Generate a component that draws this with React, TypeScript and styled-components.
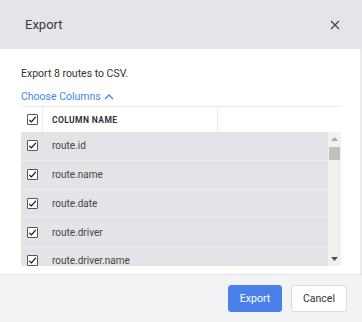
import React from 'react'
import styled, { createGlobalStyle } from 'styled-components'

const GlobalStyle = createGlobalStyle`
  html, body {
    margin: 0;
    padding: 0;
    background: #ffffff;
  }
  body {
    font-family: Roboto, "Liberation Sans", Arial, sans-serif;
  }
  * {
    box-sizing: border-box;
  }
`

const COLUMNS = ['route.id', 'route.name', 'route.date', 'route.driver', 'route.driver.name']

const Modal = styled.div`
  width: 362px;
  height: 322px;
  display: flex;
  flex-direction: column;
  overflow: hidden;
`

const Header = styled.div`
  height: 49px;
  flex-shrink: 0;
  display: flex;
  align-items: center;
  justify-content: space-between;
  padding: 0 21px 0 25px;
  background: #e4e5e9;
`

const Title = styled.div`
  font-size: 13px;
  color: #3a3a3a;
`

const CloseButton = styled.button`
  border: none;
  background: none;
  padding: 0;
  width: 12px;
  height: 12px;
  display: flex;
  cursor: pointer;
  color: #444444;
`

const Body = styled.div`
  flex: 1;
  background: #ffffff;
  padding: 18px 21px 8px;
  border-right: 2px solid #ececee;
  display: flex;
  flex-direction: column;
`

const Intro = styled.div`
  font-size: 10.5px;
  line-height: 13px;
  color: #333333;
`

const Toggle = styled.button`
  margin-top: 10px;
  margin-bottom: 3px;
  align-self: flex-start;
  display: flex;
  align-items: center;
  gap: 3px;
  border: none;
  background: none;
  padding: 0;
  font-family: inherit;
  font-size: 10.5px;
  line-height: 13px;
  color: #4a86e8;
  cursor: pointer;
`

const Table = styled.div`
  width: 320px;
  border-top: 1px solid #ececef;
`

const HeadRow = styled.div`
  display: grid;
  grid-template-columns: 22px 175px 1fr;
  height: 25px;
  background: #ffffff;
`

const HeadCell = styled.div<{ divider?: boolean }>`
  display: flex;
  align-items: center;
  padding-left: ${({ divider }) => (divider ? '9px' : '6px')};
  border-right: 1px solid #ececef;
  font-size: 8.5px;
  font-weight: 700;
  letter-spacing: 0.4px;
  text-transform: uppercase;
  color: #333333;

  &:last-child {
    border-right: none;
  }
`

const ListFrame = styled.div`
  height: 134px;
  display: flex;
`

const Rows = styled.div`
  flex: 1;
  overflow: hidden;
  background: #e3e4e8;
`

const Row = styled.div`
  display: grid;
  grid-template-columns: 22px 1fr;
  height: 28.75px;
  border-bottom: 1px solid #ebecef;
`

const CheckCell = styled.div`
  display: flex;
  align-items: center;
  padding-left: 6px;
`

const NameCell = styled.div`
  display: flex;
  align-items: center;
  padding-left: 9px;
  font-size: 10px;
  color: #444444;
`

const Box = styled.span`
  width: 11px;
  height: 11px;
  border: 1px solid #555555;
  border-radius: 1px;
  background: #ffffff;
  display: flex;
  align-items: center;
  justify-content: center;
`

const ScrollTrack = styled.div`
  width: 13px;
  flex-shrink: 0;
  display: flex;
  flex-direction: column;
  background: #f1f1f1;
`

const ScrollArrow = styled.div`
  height: 14px;
  display: flex;
  align-items: center;
  justify-content: center;
`

const ScrollThumb = styled.div`
  height: 13px;
  margin: 1px 1px 0;
  background: #c1c1c1;
`

const ScrollSpace = styled.div`
  flex: 1;
`

const Footer = styled.div`
  height: 48px;
  flex-shrink: 0;
  display: flex;
  align-items: center;
  justify-content: flex-end;
  gap: 9px;
  padding: 0 15px 0 0;
  background: #f2f3f5;
  border-top: 1px solid #e2e3e6;
`

const Button = styled.button<{ primary?: boolean }>`
  height: 27px;
  width: ${({ primary }) => (primary ? '54px' : '56px')};
  border-radius: 3px;
  border: 1px solid ${({ primary }) => (primary ? '#4a80ea' : '#dcdde0')};
  background: ${({ primary }) => (primary ? '#4a80ea' : '#ffffff')};
  color: ${({ primary }) => (primary ? '#ffffff' : '#333333')};
  font-family: inherit;
  font-size: 10.5px;
  cursor: pointer;
`

function Check() {
  return (
    <Box>
      <svg width="9" height="9" viewBox="0 0 9 9">
        <path d="M1.3 4.8 L3.4 6.9 L7.8 1.8" fill="none" stroke="#111" strokeWidth="1.2" />
      </svg>
    </Box>
  )
}

function Scrollbar() {
  return (
    <ScrollTrack>
      <ScrollArrow>
        <svg width="7" height="4" viewBox="0 0 7 4">
          <path d="M0 4 L3.5 0 L7 4z" fill="#a8a8a8" />
        </svg>
      </ScrollArrow>
      <ScrollThumb />
      <ScrollSpace />
      <ScrollArrow>
        <svg width="7" height="4" viewBox="0 0 7 4">
          <path d="M0 0 L3.5 4 L7 0z" fill="#505050" />
        </svg>
      </ScrollArrow>
    </ScrollTrack>
  )
}

export default function App() {
  return (
    <>
      <GlobalStyle />
      <Modal>
        <Header>
          <Title>Export</Title>
          <CloseButton aria-label="Close">
            <svg width="12" height="12" viewBox="0 0 12 12">
              <path d="M2 2 L10 10 M10 2 L2 10" stroke="currentColor" strokeWidth="1.2" />
            </svg>
          </CloseButton>
        </Header>
        <Body>
          <Intro>Export 8 routes to CSV.</Intro>
          <Toggle>
            Choose Columns
            <svg width="10" height="7" viewBox="0 0 10 7">
              <path d="M1 6 L5 2 L9 6" fill="none" stroke="currentColor" strokeWidth="1.4" />
            </svg>
          </Toggle>
          <Table>
            <HeadRow>
              <HeadCell>
                <Check />
              </HeadCell>
              <HeadCell divider>Column Name</HeadCell>
              <HeadCell />
            </HeadRow>
            <ListFrame>
              <Rows>
                {COLUMNS.map((name) => (
                  <Row key={name}>
                    <CheckCell>
                      <Check />
                    </CheckCell>
                    <NameCell>{name}</NameCell>
                  </Row>
                ))}
              </Rows>
              <Scrollbar />
            </ListFrame>
          </Table>
        </Body>
        <Footer>
          <Button primary>Export</Button>
          <Button>Cancel</Button>
        </Footer>
      </Modal>
    </>
  )
}
